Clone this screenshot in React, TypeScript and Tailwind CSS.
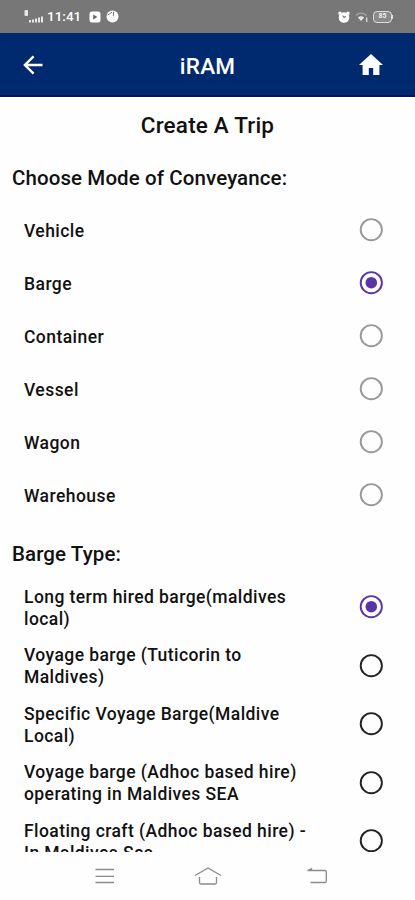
type Option = { label: string; checked?: boolean };

const modes: Option[] = [
  { label: "Vehicle" },
  { label: "Barge", checked: true },
  { label: "Container" },
  { label: "Vessel" },
  { label: "Wagon" },
  { label: "Warehouse" },
];

const bargeTypes: Option[] = [
  { label: "Long term hired barge(maldives local)", checked: true },
  { label: "Voyage barge (Tuticorin to Maldives)" },
  { label: "Specific Voyage Barge(Maldive Local)" },
  { label: "Voyage barge (Adhoc based hire) operating in Maldives SEA" },
  { label: "Floating craft (Adhoc based hire) - In Maldives Sea" },
];

const Radio = ({ checked, color }: { checked?: boolean; color: string }) => (
  <svg className="size-6 shrink-0" viewBox="0 0 24 24" fill="none">
    <circle cx="12.3" cy="11.7" r="10.6" stroke={checked ? "#5b35a5" : color} strokeWidth="1.9" />
    {checked && <circle cx="12.3" cy="11.7" r="5.8" fill="#5b35a5" />}
  </svg>
);

const StatusBar = () => (
  <div className="flex h-[33px] shrink-0 items-center justify-between bg-[#777777] pl-6 pr-[22px] text-white">
    <div className="flex items-center">
      <svg className="h-[13px] w-5" viewBox="0 0 20 13" fill="#e8e8e8">
        <rect x="0.5" y="0" width="3.5" height="6" rx="1" />
        <path d="M5 10h2v2.500H5zM8 9.500h2v3H8zM11 8.500h2v4h-2zM14 7.500h2v5h-2zM17 6.500h2v6h-2z" />
      </svg>
      <span className="ml-[3px] w-[34px] text-[13.5px] leading-none font-medium">11:41</span>
      <svg className="ml-2 h-3 w-3" viewBox="0 0 12 12">
        <rect x="0.5" y="0.5" width="11" height="11" rx="2.5" fill="#fff" />
        <path d="M4.2 3.4l4.2 2.6-4.2 2.6z" fill="#666" />
      </svg>
      <svg className="ml-[5px] h-[13px] w-[13px]" viewBox="0 0 13 13">
        <circle cx="6.5" cy="6.5" r="6" fill="#fff" />
        <path d="M1.500 5.200l4.500-3M7.300 6.200l.3-4.500" stroke="#777" strokeWidth="1" />
      </svg>
    </div>
    <div className="flex items-center">
      <svg className="h-3 w-3" viewBox="0 0 12 12">
        <circle cx="6" cy="6.500" r="5.300" fill="#fff" />
        <path d="M.5.8h3v3h-3zM8.500.8h3v3h-3z" fill="#fff" />
        <path d="M4.600 4.500l1.400 2 1.800-1.300" stroke="#777" strokeWidth="1.100" fill="none" />
      </svg>
      <svg className="ml-[5px] h-3 w-[14px]" viewBox="0 0 14 12" fill="none">
        <path d="M.8 4.500C3.800 1.300 8.500 1.300 11.500 4.500" stroke="#aaa" strokeWidth="1.300" />
        <path d="M2.800 6.500Q6 4 9.200 6.500L6 10z" fill="#e5e5e5" />
        <path d="M11.700 6.500V11" stroke="#ddd" strokeWidth="1.300" />
      </svg>
      <div className="ml-1 flex h-3 w-[19px] items-center justify-center rounded-[4px] border-[1.5px] border-[#ddd] bg-[#8a8a8a] text-[7px] leading-none font-bold text-[#eee]">
        85
      </div>
      <div className="h-1 w-px bg-[#ddd]" />
    </div>
  </div>
);

const Header = () => (
  <header className="grid h-16 shrink-0 grid-cols-3 items-center border-b-2 border-[#00145f] bg-[#002a70] pl-[21px] pr-[21px]">
    <svg className="mt-px size-6" viewBox="0 0 24 24" fill="none" stroke="#fff" strokeWidth="2.400">
      <path d="M21.500 12H4M12.600 3.300L3.900 12l8.700 8.700" />
    </svg>
    <h1 className="mt-1 text-center text-[22.500px] leading-none font-medium tracking-[0.200px] text-white">iRAM</h1>
    <svg className="mt-px mr-[10px] size-[26px] justify-self-end" viewBox="0 0 26 26" fill="#fff">
      <path d="M13 2L1 13h3.600v10h6.200v-7h4.400v7h6.200V13H25z" />
    </svg>
  </header>
);

const NavBar = () => (
  <nav className="flex h-12 shrink-0 items-center pl-[94px]">
    <svg className="h-[18px] w-[21px]" viewBox="0 0 21 18" stroke="#8b8b8b" strokeWidth="1.300">
      <path d="M1.500 2.500h18.500M1.500 9.300h18.500M1.500 15.500h18.500" />
    </svg>
    <svg className="ml-[79px] h-5 w-7" viewBox="0 0 28 20" fill="none" stroke="#8b8b8b" strokeWidth="1.300">
      <path d="M1 9.500L14 2l13 7.500M5.500 11v5.500q0 1.500 1.500 1.500h14q1.500 0 1.500-1.500V11" />
    </svg>
    <svg className="ml-[84px] h-[18px] w-[22px]" viewBox="0 0 22 18" fill="none" stroke="#8b8b8b" strokeWidth="1.300">
      <path d="M1.500 3.500h17.500q1.300 0 1.300 1.300v9.400q0 1.300-1.300 1.300H4.500M1.500 3.500l4-1.800v1.800" />
    </svg>
  </nav>
);

export default function App() {
  return (
    <div className="flex h-[900px] w-[415px] flex-col overflow-hidden bg-[#fefefe] font-[Roboto,sans-serif] text-[#111]">
      <StatusBar />
      <Header />
      <main className="flex h-[755px] shrink-0 flex-col overflow-hidden">
        <h2 className="mt-[13px] text-center text-[22.500px] leading-[30px] font-medium tracking-[0.180px]">
          Create A Trip
        </h2>
        <h3 className="mt-[24px] pl-3 text-[20.500px] leading-[28px] font-medium tracking-[0.100px]">
          Choose Mode of Conveyance:
        </h3>
        <div className="mt-[11px] flex flex-col">
          {modes.map((mode) => (
            <div key={mode.label} className="flex h-[53px] items-center justify-between pl-6 pr-8">
              <span className="pt-[2px] text-[17.500px] leading-[22px] font-medium tracking-[0.450px]">{mode.label}</span>
              <Radio checked={mode.checked} color="#999999" />
            </div>
          ))}
        </div>
        <h3 className="mt-[19px] pl-3 text-[20.500px] leading-[28px] font-medium tracking-[0.100px]">Barge Type:</h3>
        <div className="mt-[10px] flex flex-col">
          {bargeTypes.map((type) => (
            <div key={type.label} className="flex h-[58.500px] items-center justify-between pl-6 pr-8">
              <span className="w-[290px] pt-px text-[17.500px] leading-[22px] font-medium tracking-[0.430px]">
                {type.label}
              </span>
              <Radio checked={type.checked} color="#222222" />
            </div>
          ))}
        </div>
      </main>
      <NavBar />
    </div>
  );
}
